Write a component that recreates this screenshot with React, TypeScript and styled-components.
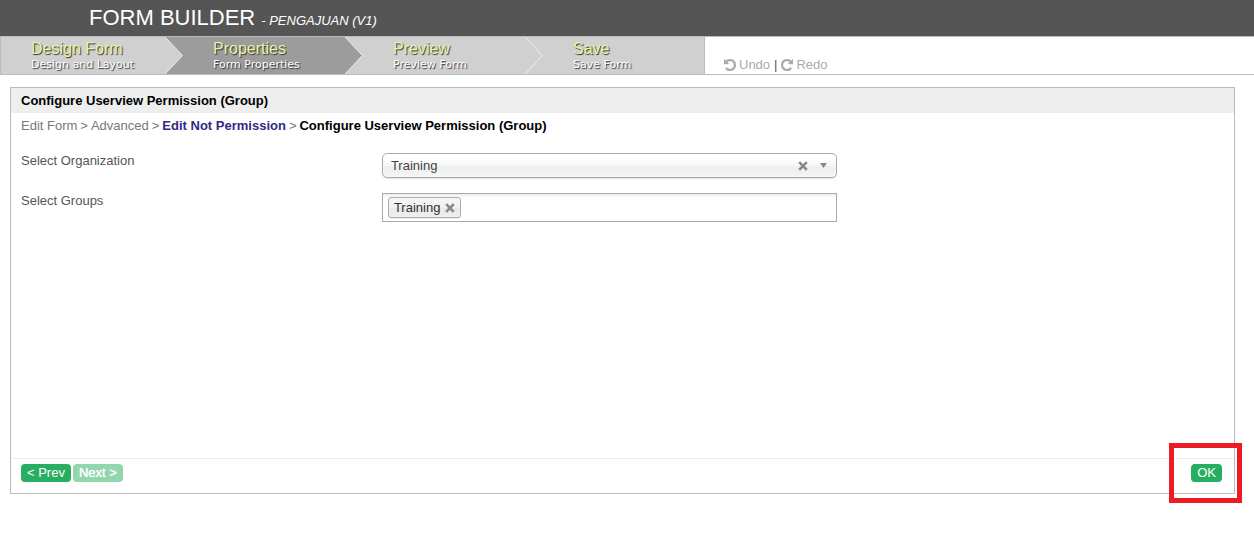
import React from "react";
import styled, { createGlobalStyle, css } from "styled-components";

const GlobalStyle = createGlobalStyle`
  * { box-sizing: border-box; }
  body {
    margin: 0;
    background: #fff;
    color: #555;
    font: 13px/16px "Liberation Sans", Arial, sans-serif;
  }
  button, input, select { font: inherit; color: inherit; }
`;

const Header = styled.header`
  display: flex;
  align-items: baseline;
  height: 37px;
  padding: 4px 0 0 89px;
  background: #555;
  border-bottom: 1px solid #bbb;
  color: #fff;
`;

const Title = styled.h1`
  margin: 0;
  font-size: 22px;
  line-height: 27px;
  font-weight: normal;
`;

const FormName = styled.em`
  margin-left: 6px;
  font-size: 13px;
`;

const Toolbar = styled.div`
  display: flex;
  height: 38px;
  border-bottom: 1px solid #bbb;
  border-left: 1px solid #bbb;
`;

const Steps = styled.nav`
  display: flex;
  background: #d0d0d0;
  border-right: 1px solid #bbb;
`;

const Step = styled.a<{ $active?: boolean; $first?: boolean }>`
  display: flex;
  width: ${(p) => (p.$first ? 182 : 180)}px;
  padding-left: 30px;
  justify-content: space-between;
  color: #fff;
  text-decoration: none;
  ${(p) =>
    p.$active &&
    css`
      background: #9c9c9c;
    `}
  &:last-child { width: 161px; }
`;

const StepText = styled.span`
  display: flex;
  flex-direction: column;
  padding-top: 3px;
`;

const StepName = styled.span`
  color: #e5f5a8;
  font-size: 16px;
  line-height: 18px;
  text-shadow: 1px 1px 1px #333;
`;

const StepHint = styled.span`
  font-family: "DejaVu Sans", Verdana, sans-serif;
  font-size: 11px;
  line-height: 13px;
  text-shadow: 1px 1px 1px #333;
`;

const Chevron = styled.svg`
  flex: none;
  width: 18px;
  height: 37px;
`;

const History = styled.div`
  display: flex;
  align-items: center;
  gap: 4px;
  padding: 18px 0 0 19px;
`;

const HistoryButton = styled.button`
  display: flex;
  align-items: center;
  gap: 3px;
  padding: 0;
  border: 0;
  background: none;
  color: #aaa;
  svg { width: 12px; height: 12px; fill: currentColor; stroke: currentColor; stroke-width: 50px; }
`;

const Panel = styled.main`
  display: flex;
  flex-direction: column;
  min-height: 407px;
  margin: 12px 19px 40px 10px;
  border: 1px solid #bbb;
`;

const PanelTitle = styled.h2`
  margin: 0;
  padding: 5px 10px 4px;
  background: #eee;
  color: #000;
  font-size: 13px;
  line-height: 16px;
`;

const Breadcrumb = styled.nav`
  display: flex;
  gap: 3px;
  padding: 4px 10px;
  line-height: 17px;
  color: #777;
  a { color: inherit; text-decoration: none; }
  strong { color: #000; }
`;

const ParentCrumb = styled.a`
  && { color: #2f2a85; font-weight: bold; }
`;

const Fields = styled.form`
  display: flex;
  flex: 1;
  flex-direction: column;
  gap: 15px;
  padding: 15px 10px;
`;

const Field = styled.div`
  display: grid;
  grid-template-columns: 30% minmax(0, 455px);
  align-items: start;
`;

const Label = styled.label`
  line-height: 16px;
`;

const SelectBox = styled.div`
  position: relative;
  width: 100%;
  height: 25px;
`;

const Select = styled.select`
  appearance: none;
  display: block;
  width: 100%;
  height: 25px;
  padding: 0 50px 0 8px;
  border: 1px solid #aaa;
  border-radius: 5px;
  background: linear-gradient(#fff 20%, #f6f6f6 50%, #eee 52%, #f4f4f4 100%);
  box-shadow: 0 0 3px #fff inset, 0 1px 1px rgba(0, 0, 0, 0.1);
  color: #444;
`;

const SelectMarks = styled.span`
  position: absolute;
  top: 0;
  right: 10px;
  bottom: 0;
  display: flex;
  align-items: center;
  gap: 12px;
  pointer-events: none;
`;

const IconButton = styled.button`
  display: flex;
  padding: 0;
  border: 0;
  background: none;
  pointer-events: auto;
`;

const TokenBox = styled.div`
  display: flex;
  align-items: center;
  gap: 4px;
  width: 100%;
  height: 29px;
  padding: 0 5px;
  border: 1px solid #aaa;
  background: linear-gradient(#eee 1%, #fff 15%);
`;

const Token = styled.span`
  display: flex;
  align-items: center;
  gap: 5px;
  height: 21px;
  padding: 0 5px;
  border: 1px solid #aaa;
  border-radius: 3px;
  background: linear-gradient(#f4f4f4 20%, #f0f0f0 50%, #e8e8e8 52%, #eee 100%);
  box-shadow: 0 0 2px #fff inset, 0 1px 0 rgba(0, 0, 0, 0.05);
  color: #333;
`;

const TokenInput = styled.input`
  flex: 1;
  min-width: 0;
  padding: 0;
  border: 0;
  outline: 0;
  background: none;
`;

const Footer = styled.footer`
  display: flex;
  align-items: flex-start;
  gap: 2px;
  height: 35px;
  padding: 5px 12px 0 10px;
  border-top: 1px solid #eee;
`;

const Button = styled.button`
  height: 18px;
  padding: 0 6px;
  border: 0;
  border-radius: 4px;
  background: #27ae60;
  color: #fff;
  line-height: 18px;
  &:disabled { opacity: 0.5; text-shadow: 0 0 1px #fff; }
`;

const Highlighted = styled.div`
  position: relative;
  display: flex;
  margin-left: auto;
  &::after {
    content: "";
    position: absolute;
    inset: -21px -20px -21px -22px;
    border: 5px solid #ed1c24;
    pointer-events: none;
  }
`;

const Cross = () => (
  <svg width="10" height="10" viewBox="0 0 10 10" aria-hidden="true">
    <path d="M1.200 1.200L8.800 8.800M8.800 1.200L1.200 8.800" stroke="#888" strokeWidth="2.600" />
  </svg>
);

const UNDO_PATH =
  "M1664 896q0 156-61 298t-164 245-245 164-298 61q-172 0-327-72.5t-264-204.5q-7-10-6.5-22.5t8.5-20.5l137-138q10-9 25-9 16 2 23 12 73 95 179 147t225 52q104 0 198.5-40.5t163.5-109.5 109.5-163.5 40.5-198.5-40.5-198.5-109.5-163.5-163.5-109.5-198.5-40.5q-98 0-188 35.5t-160 101.5l137 138q31 30 14 69-17 40-59 40h-448q-26 0-45-19t-19-45v-448q0-42 40-59 39-17 69 14l130 129q107-101 244.5-156.500t284.500-55.500q156 0 298 61t245 164 164 245 61 298z";

const steps = [
  { name: "Design Form", hint: "Design and Layout", fill: "#d0d0d0", next: "#9c9c9c" },
  { name: "Properties", hint: "Form Properties", fill: "#9c9c9c", next: "#d0d0d0", active: true },
  { name: "Preview", hint: "Preview Form", fill: "#d0d0d0", next: "#d0d0d0" },
  { name: "Save", hint: "Save Form" },
];

export default function App() {
  return (
    <>
      <GlobalStyle />
      <Header>
        <Title>FORM BUILDER</Title>
        <FormName>- PENGAJUAN (V1)</FormName>
      </Header>
      <Toolbar>
        <Steps aria-label="Steps">
          {steps.map((s, i) => (
            <Step key={s.name} href="#" $active={s.active} $first={i === 0}>
              <StepText>
                <StepName>{s.name}</StepName>
                <StepHint>{s.hint}</StepHint>
              </StepText>
              {s.fill && (
                <Chevron viewBox="0 0 18 37" aria-hidden="true">
                  <rect width="18" height="37" fill={s.next} />
                  <path d="M0 0L17.500 18.500L0 37z" fill={s.fill} />
                  <path d="M0 0L17.500 18.500L0 37" fill="none" stroke="#eee" />
                </Chevron>
              )}
            </Step>
          ))}
        </Steps>
        <History>
          <HistoryButton type="button">
            <svg viewBox="128 128 1536 1536" aria-hidden="true">
              <path d={UNDO_PATH} />
            </svg>
            Undo
          </HistoryButton>
          <span>|</span>
          <HistoryButton type="button">
            <svg viewBox="128 128 1536 1536" aria-hidden="true">
              <path d={UNDO_PATH} transform="matrix(-1 0 0 1 1792 0)" />
            </svg>
            Redo
          </HistoryButton>
        </History>
      </Toolbar>
      <Panel>
        <PanelTitle>Configure Userview Permission (Group)</PanelTitle>
        <Breadcrumb aria-label="Breadcrumb">
          <a href="#">Edit Form</a>
          <span>&gt;</span>
          <a href="#">Advanced</a>
          <span>&gt;</span>
          <ParentCrumb href="#">Edit Not Permission</ParentCrumb>
          <span>&gt;</span>
          <strong>Configure Userview Permission (Group)</strong>
        </Breadcrumb>
        <Fields>
          <Field>
            <Label htmlFor="organization">Select Organization</Label>
            <SelectBox>
              <Select id="organization" defaultValue="training">
                <option value="training">Training</option>
              </Select>
              <SelectMarks>
                <IconButton type="button" aria-label="Clear organization">
                  <Cross />
                </IconButton>
                <svg width="7" height="5" viewBox="0 0 7 5" aria-hidden="true">
                  <path d="M0 0H7L3.500 5z" fill="#888" />
                </svg>
              </SelectMarks>
            </SelectBox>
          </Field>
          <Field>
            <Label htmlFor="groups">Select Groups</Label>
            <TokenBox>
              <Token>
                Training
                <IconButton type="button" aria-label="Remove Training">
                  <Cross />
                </IconButton>
              </Token>
              <TokenInput id="groups" type="text" />
            </TokenBox>
          </Field>
        </Fields>
        <Footer>
          <Button type="button">&lt; Prev</Button>
          <Button type="button" disabled>
            Next &gt;
          </Button>
          <Highlighted>
            <Button type="button">OK</Button>
          </Highlighted>
        </Footer>
      </Panel>
    </>
  );
}
